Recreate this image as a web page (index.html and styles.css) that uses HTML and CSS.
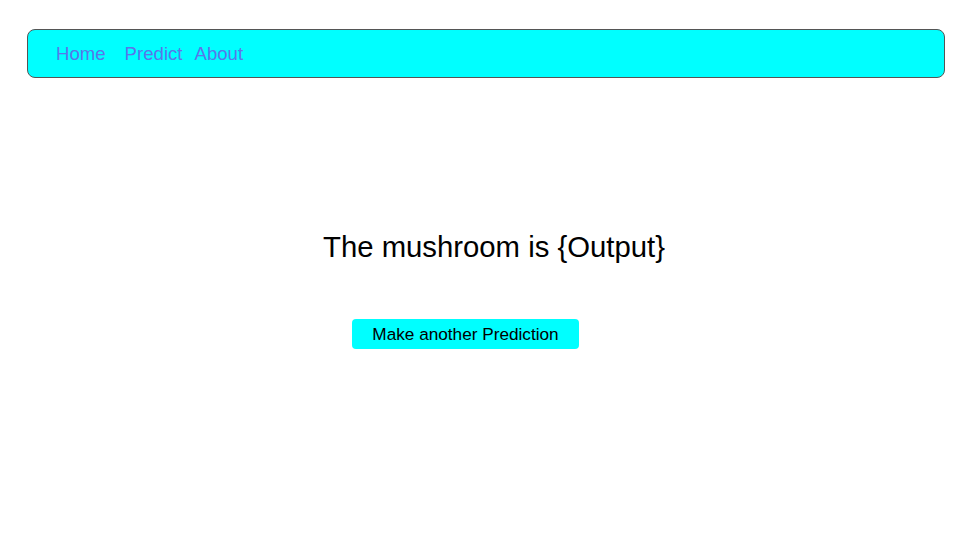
FILE: index.html
```html
<!DOCTYPE html>
<html lang="en">
<head>
<meta charset="utf-8">
<title>Mushroom Prediction</title>
<link rel="stylesheet" href="styles.css">
</head>
<body>
<nav class="navbar">
  <a class="nav-link nav-home" href="#">Home</a>
  <a class="nav-link nav-predict" href="#">Predict</a>
  <a class="nav-link" href="#">About</a>
</nav>
<main class="result">
  <h1 class="result-title">The mushroom is {Output}</h1>
  <div class="result-actions">
    <button class="again-btn" type="button">Make another Prediction</button>
  </div>
</main>
</body>
</html>
```

FILE: styles.css
```css
html, body {
  margin: 0;
  padding: 0;
  background: #ffffff;
  font-family: "Liberation Sans", Arial, sans-serif;
}

.navbar {
  box-sizing: border-box;
  margin: 29px 15px 0 27px;
  height: 49px;
  background: #00ffff;
  border: 1px solid #555555;
  border-radius: 8px;
  display: flex;
  align-items: center;
  padding: 1px 0 0 28px;
}

.nav-link {
  font-size: 18.6px;
  color: #5a76ea;
  text-decoration: none;
  line-height: 22px;
}

.nav-home {
  margin-right: 19px;
}

.nav-predict {
  margin-right: 12px;
}

.result {
  text-align: center;
}

.result-title {
  margin: 152px 0 0 0;
  padding-left: 28px;
  font-size: 29.3px;
  font-weight: normal;
  line-height: 33px;
  color: #000000;
}

.result-actions {
  margin-top: 56px;
  padding-right: 29px;
}

.again-btn {
  font-family: "Liberation Sans", Arial, sans-serif;
  font-size: 17.2px;
  line-height: 20px;
  height: 30px;
  width: 227px;
  padding: 0;
  background: #00ffff;
  color: #000000;
  border: none;
  border-radius: 4px;
}
```
